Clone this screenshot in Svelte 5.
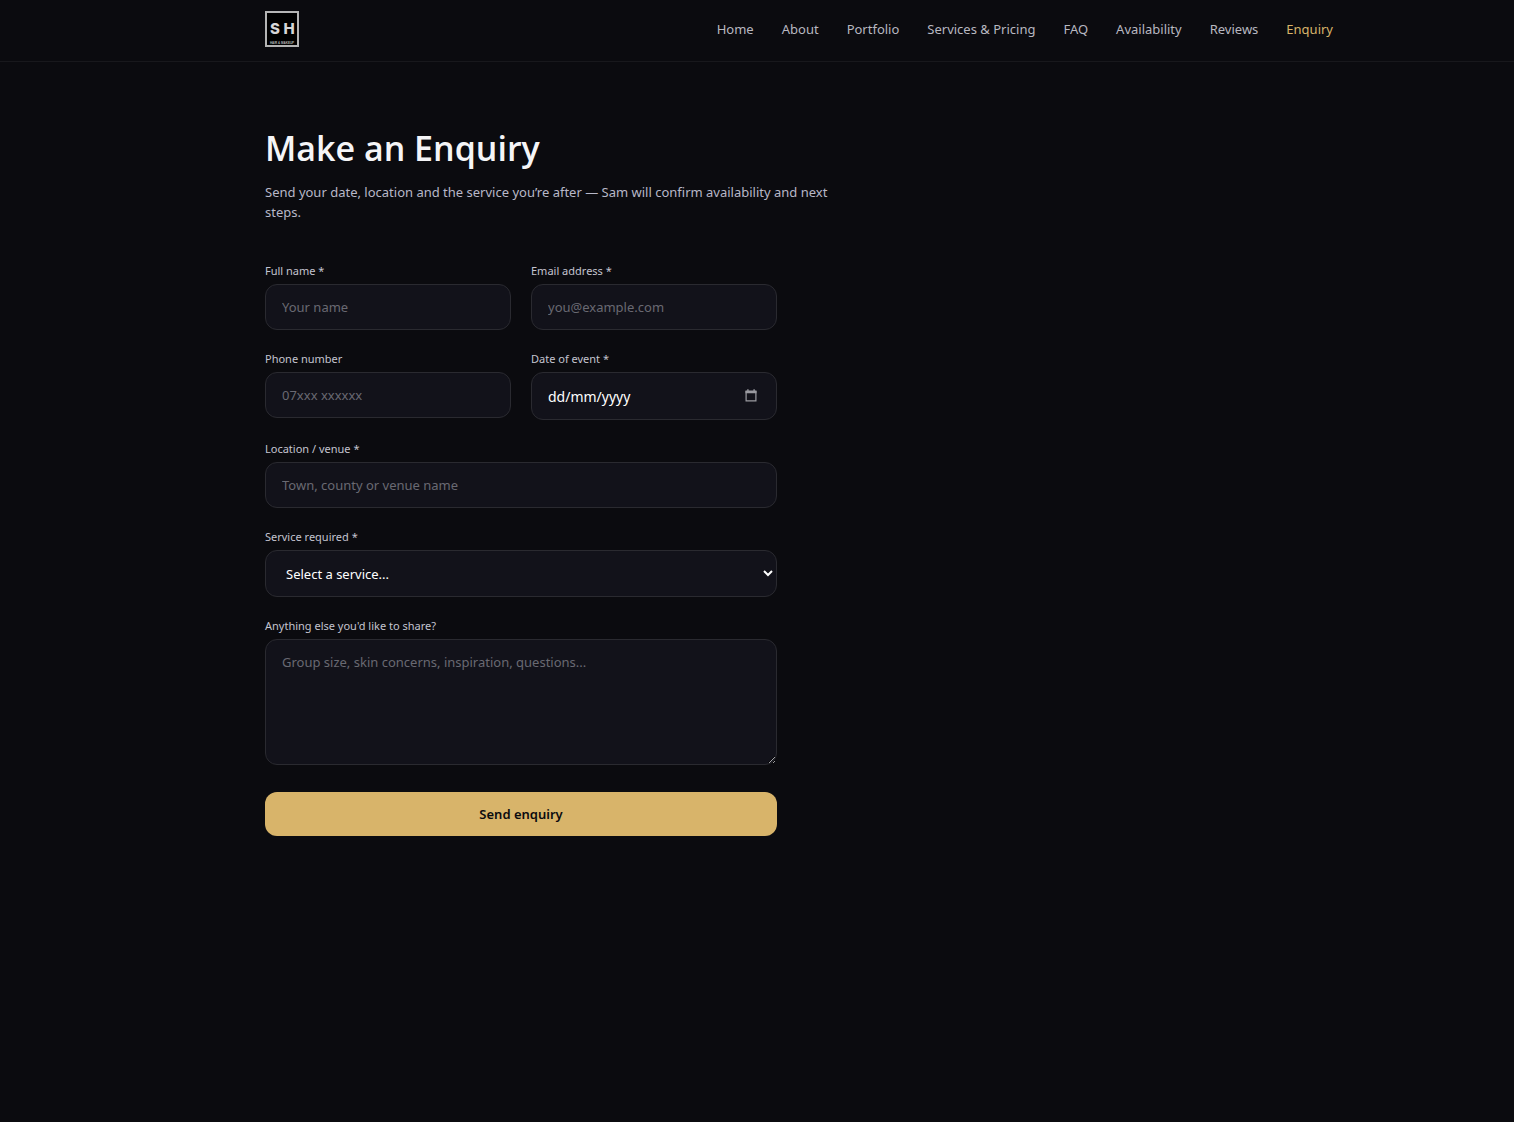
<script lang="ts">
  const links = [
    { label: 'Home', href: '#home' },
    { label: 'About', href: '#about' },
    { label: 'Portfolio', href: '#portfolio' },
    { label: 'Services & Pricing', href: '#services' },
    { label: 'FAQ', href: '#faq' },
    { label: 'Availability', href: '#availability' },
    { label: 'Reviews', href: '#reviews' },
    { label: 'Enquiry', href: '#enquiry' },
  ];

  const services = ['Bridal hair & makeup', 'Occasion makeup', 'Hair styling', 'Makeup lesson'];

  let current = $state('Enquiry');
  let form = $state({
    name: '',
    email: '',
    phone: '',
    date: '',
    location: '',
    service: '',
    message: '',
  });
  let dateInput: HTMLInputElement;

  function handleSubmit(e: SubmitEvent) {
    e.preventDefault();
  }
</script>

<header class="site-header">
  <div class="header-inner">
    <a class="logo" href="#home" aria-label="SH Hair & Makeup">
      <svg width="34" height="36" viewBox="0 0 34 36">
        <rect x="1" y="1" width="32" height="34" fill="#000" stroke="#b4b4b4" stroke-width="2" />
        <text x="10" y="23" class="logo-main" text-anchor="middle">S</text>
        <text x="24" y="23" class="logo-main" text-anchor="middle">H</text>
        <text x="17" y="33" class="logo-sub" text-anchor="middle">HAIR & MAKEUP</text>
      </svg>
    </a>
    <nav>
      {#each links as link}
        <a
          href={link.href}
          class:active={current === link.label}
          onclick={() => (current = link.label)}
        >{link.label}</a>
      {/each}
    </nav>
  </div>
</header>

<main>
  <h1>Make an Enquiry</h1>
  <p class="intro">
    Send your date, location and the service you’re after — Sam will confirm availability and next
    steps.
  </p>

  <form onsubmit={handleSubmit}>
    <div class="row">
      <div class="field">
        <label for="name">Full name *</label>
        <input id="name" type="text" placeholder="Your name" bind:value={form.name} />
      </div>
      <div class="field">
        <label for="email">Email address *</label>
        <input id="email" type="email" placeholder="you@example.com" bind:value={form.email} />
      </div>
    </div>

    <div class="row">
      <div class="field">
        <label for="phone">Phone number</label>
        <input id="phone" type="tel" placeholder="07xxx xxxxxx" bind:value={form.phone} />
      </div>
      <div class="field">
        <label for="date">Date of event *</label>
        <div class="date-box">
          <input
            id="date"
            type="text"
            inputmode="numeric"
            placeholder="dd/mm/yyyy"
            bind:value={form.date}
            bind:this={dateInput}
          />
          <button type="button" class="btn-calendar" aria-label="Choose a date" onclick={() => dateInput.focus()}>
            <svg width="12" height="13" viewBox="0 0 12 13" fill="none">
              <path d="M1.1 2.5h9.8v9.4H1.1z" stroke="#9a9aa0" stroke-width="1.2" />
              <path d="M0.5 1.5h11v2.8H0.5zM2.2 0.3h1.4V2H2.2zM8.4 0.3h1.4V2H8.4z" fill="#9a9aa0" />
            </svg>
          </button>
        </div>
      </div>
    </div>

    <div class="field">
      <label for="location">Location / venue *</label>
      <input id="location" type="text" placeholder="Town, county or venue name" bind:value={form.location} />
    </div>

    <div class="field">
      <label for="service">Service required *</label>
      <div class="select-box">
        <select id="service" bind:value={form.service}>
          <option value="">Select a service...</option>
          {#each services as service}
            <option value={service}>{service}</option>
          {/each}
        </select>
        <svg class="chevron" width="10" height="7" viewBox="0 0 10 7" fill="none">
          <path d="M1 1l4 4 4-4" stroke="#fff" stroke-width="2" />
        </svg>
      </div>
    </div>

    <div class="field">
      <label for="message">Anything else you'd like to share?</label>
      <textarea
        id="message"
        placeholder="Group size, skin concerns, inspiration, questions..."
        bind:value={form.message}
      ></textarea>
    </div>

    <button type="submit" class="btn-send">Send enquiry</button>
  </form>
</main>

<style>
  :global(body) {
    background: #0b0b0f;
    color: #f5f5f7;
    font-family: 'Noto Sans', 'Open Sans', sans-serif;
  }

  .site-header {
    border-bottom: 1px solid #18181c;
  }

  .header-inner {
    display: flex;
    justify-content: space-between;
    align-items: center;
    max-width: 1152px;
    margin: 0 auto;
    padding: 11px 20px 14px;
  }

  .logo {
    display: flex;
    margin-left: 84px;
  }

  .logo-main {
    font-family: Inter, 'Liberation Sans', sans-serif;
    font-size: 15px;
    font-weight: 800;
    fill: #d6d6d6;
  }

  .logo-sub {
    font-family: 'Liberation Sans', Arial, sans-serif;
    font-size: 3px;
    font-weight: 700;
    fill: #b4b4b4;
  }

  nav {
    display: flex;
    gap: 28px;
  }

  nav a {
    font-size: 13px;
    line-height: 20px;
    color: #b8b8c0;
    text-decoration: none;
    white-space: nowrap;
  }

  nav a:hover,
  nav a.active {
    color: #d8b46a;
  }

  main {
    max-width: 984px;
    margin: 0 auto;
    padding: 64px 20px;
  }

  h1 {
    margin: 0;
    font-family: 'Open Sans', 'Noto Sans', sans-serif;
    font-size: 34px;
    line-height: 44px;
    font-weight: 600;
  }

  .intro {
    max-width: 576px;
    margin: 12px 0 40px;
    font-size: 13px;
    line-height: 20px;
    color: #b8b8c8;
  }

  form {
    display: flex;
    flex-direction: column;
    gap: 20px;
    max-width: 512px;
  }

  .row {
    display: grid;
    grid-template-columns: 1fr 1fr;
    align-items: start;
    gap: 20px;
  }

  .field {
    display: flex;
    flex-direction: column;
    gap: 4px;
  }

  label {
    font-size: 11px;
    line-height: 18px;
    color: #c4c4d0;
  }

  input,
  select,
  textarea {
    width: 100%;
    box-sizing: border-box;
    padding: 12px 16px;
    border: 1px solid #2a2a30;
    border-radius: 12px;
    background: #12121a;
    color: #fff;
    font-family: inherit;
    font-size: 13px;
    line-height: 20px;
  }

  input {
    height: 46px;
  }

  input::placeholder,
  textarea::placeholder {
    color: #696972;
    opacity: 1;
  }

  input:focus,
  select:focus,
  textarea:focus {
    outline: none;
    border-color: #d8b46a;
  }

  .date-box,
  .select-box {
    position: relative;
    display: flex;
  }

  .date-box input {
    height: 48px;
    padding-right: 44px;
    font-size: 14px;
  }

  .date-box input::placeholder {
    color: #fff;
  }

  .btn-calendar {
    position: absolute;
    top: 17px;
    right: 20px;
    display: flex;
    padding: 0;
    border: none;
    background: none;
    cursor: pointer;
  }

  select {
    height: 47px;
    padding-left: 20px;
    appearance: none;
  }

  .chevron {
    position: absolute;
    top: 20px;
    right: 4px;
    pointer-events: none;
  }

  textarea {
    height: 126px;
    resize: vertical;
  }

  .btn-send {
    margin-top: 7px;
    padding: 12px 24px;
    border: none;
    border-radius: 12px;
    background: #d8b46a;
    color: #0b0b0f;
    font-family: inherit;
    font-size: 13px;
    line-height: 20px;
    font-weight: 600;
    cursor: pointer;
  }

  .btn-send:hover {
    background: #e2c07a;
  }

  @media (max-width: 900px) {
    .header-inner {
      flex-wrap: wrap;
      gap: 12px;
    }

    .logo {
      margin-left: 0;
    }

    nav {
      flex-wrap: wrap;
      gap: 12px 20px;
    }
  }

  @media (max-width: 520px) {
    .row {
      grid-template-columns: 1fr;
    }
  }
</style>
